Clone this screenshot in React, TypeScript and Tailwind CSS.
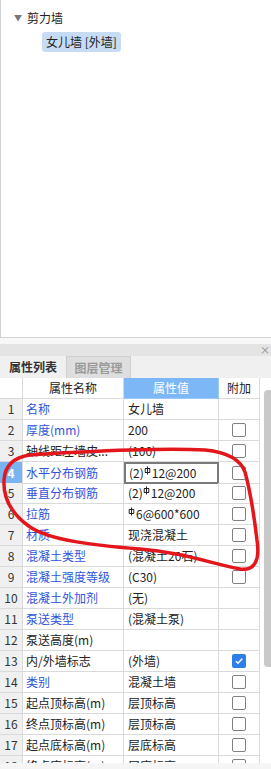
import React from 'react'

type Row = {
  no: number
  name: string
  blue: boolean
  value: React.ReactNode
  box: 'none' | 'empty' | 'checked'
}

function Hrb() {
  // 三级钢符号
  return (
    <svg width="7" height="9" viewBox="0 0 7 9" className="mb-[5px] mr-[1px]">
      <path d="M3.5 0.5v8M1 2.5h5M1 6.5h5M1.2 2.5v4M5.8 2.5v4" stroke="#222" strokeWidth="1" fill="none" />
    </svg>
  )
}

function Hpb() {
  return (
    <svg width="7" height="9" viewBox="0 0 7 9" className="mb-[5px] mr-[1px]">
      <path d="M3.5 0.5v8M1.2 2.5h4.6v4H1.2z" stroke="#222" strokeWidth="1" fill="none" />
    </svg>
  )
}

const rows: Row[] = [
  { no: 1, name: '名称', blue: true, value: '女儿墙', box: 'none' },
  { no: 2, name: '厚度(mm)', blue: true, value: '200', box: 'empty' },
  { no: 3, name: '轴线距左墙皮...', blue: false, value: '(100)', box: 'empty' },
  { no: 4, name: '水平分布钢筋', blue: true, value: <>(2)<Hrb />12@200</>, box: 'empty' },
  { no: 5, name: '垂直分布钢筋', blue: true, value: <>(2)<Hrb />12@200</>, box: 'empty' },
  { no: 6, name: '拉筋', blue: true, value: <><Hpb />6@600*600</>, box: 'empty' },
  { no: 7, name: '材质', blue: true, value: '现浇混凝土', box: 'empty' },
  { no: 8, name: '混凝土类型', blue: true, value: '(混凝土20石)', box: 'empty' },
  { no: 9, name: '混凝土强度等级', blue: true, value: '(C30)', box: 'empty' },
  { no: 10, name: '混凝土外加剂', blue: true, value: '(无)', box: 'none' },
  { no: 11, name: '泵送类型', blue: true, value: '(混凝土泵)', box: 'none' },
  { no: 12, name: '泵送高度(m)', blue: false, value: '', box: 'none' },
  { no: 13, name: '内/外墙标志', blue: false, value: '(外墙)', box: 'checked' },
  { no: 14, name: '类别', blue: true, value: '混凝土墙', box: 'empty' },
  { no: 15, name: '起点顶标高(m)', blue: false, value: '层顶标高', box: 'empty' },
  { no: 16, name: '终点顶标高(m)', blue: false, value: '层顶标高', box: 'empty' },
  { no: 17, name: '起点底标高(m)', blue: false, value: '层底标高', box: 'empty' },
  { no: 18, name: '终点底标高(m)', blue: false, value: '层底标高', box: 'empty' },
]

function Box({ kind }: { kind: Row['box'] }) {
  if (kind === 'none') return null
  if (kind === 'checked')
    return (
      <span className="w-[14px] h-[14px] rounded-[2px] bg-[#2f7fe8] flex items-center justify-center">
        <svg width="10" height="10" viewBox="0 0 10 10">
          <path d="M2 5.2l2 2L8.2 2.8" stroke="#fff" strokeWidth="1.6" fill="none" />
        </svg>
      </span>
    )
  return <span className="w-[14px] h-[14px] rounded-[2px] border border-[#808080] bg-white" />
}

export default function App() {
  return (
    <div className="relative w-[271px] h-[769px] overflow-hidden bg-[#f7f7f7] text-[12px] text-[#222] font-['Noto_Sans_CJK_SC','Microsoft_YaHei',sans-serif]">
      {/* 构件树 */}
      <div className="h-[338px] bg-white border-l border-b border-[#d2d2d2] pt-[9px]">
        <div className="flex items-center h-[18px] pl-[13px]">
          <span className="text-[8px] text-[#777] mr-[5px]">▼</span>
          <span>剪力墙</span>
        </div>
        <div className="flex mt-[5px] pl-[41px]">
          <span className="h-[20px] px-[4px] rounded-[3px] bg-[#c7dcf4] flex items-center">女儿墙 [外墙]</span>
        </div>
      </div>

      <div className="h-[6px]" />
      <div className="h-[12px] bg-[#e4e4e4] flex items-center justify-end pr-[1px] text-[10px] leading-none text-[#888]">×</div>

      {/* 标签 */}
      <div className="h-[22px] bg-[#f0f0f0] flex">
        <div className="w-[66px] flex items-center justify-center font-bold text-[#333]">属性列表</div>
        <div className="w-[65px] flex items-center justify-center font-bold text-[#9a9a9a] bg-[#dedede] border-x border-t border-[#cfcfcf]">图层管理</div>
      </div>

      <div className="flex bg-white">
        <div className="w-[260px]">
          <div className="grid grid-cols-[23px_101px_95px_41px] h-[21px]">
            <div className="border-r border-b border-[#dadada]" />
            <div className="border-r border-b border-[#dadada] flex items-center justify-center">属性名称</div>
            <div className="border-r border-b border-[#9cc8f5] bg-[#7db7f5] text-white flex items-center justify-center">属性值</div>
            <div className="border-r border-b border-[#dadada] flex items-center justify-center">附加</div>
          </div>
          {rows.map((r) => (
            <div key={r.no} className="grid grid-cols-[23px_101px_95px_41px] h-[21px]">
              <div
                className={
                  r.no === 4
                    ? 'border-r border-b border-[#dadada] bg-[#79b3f2] text-white font-bold flex items-center justify-center'
                    : 'border-r border-b border-[#dadada] bg-[#f0f0f0] text-[#333] flex items-center justify-center'
                }
              >
                {r.no}
              </div>
              <div className={'border-r border-b border-[#dadada] flex items-center pl-[3px] whitespace-nowrap ' + (r.blue ? 'text-[#2f55dc]' : 'text-[#222]')}>
                {r.name}
              </div>
              <div
                className={
                  r.no === 4
                    ? 'border-2 border-[#7a7a7a] flex items-center pl-[3px] whitespace-nowrap'
                    : 'border-r border-b border-[#dadada] flex items-center pl-[4px] whitespace-nowrap'
                }
              >
                {r.value}
              </div>
              <div className="border-r border-b border-[#dadada] flex items-center justify-center">
                <Box kind={r.box} />
              </div>
            </div>
          ))}
        </div>
        <div className="w-[11px] pt-[12px] pl-[4px]">
          <div className="h-[277px] bg-[#c9c9c9] rounded-l-[4px] rounded-r-[1px]" />
        </div>
      </div>

      <div className="absolute left-0 right-0 bottom-0 h-[6px] bg-[#f5f5f5]" />

      {/* 红色圈注 */}
      <svg className="absolute inset-0 pointer-events-none" width="271" height="769" viewBox="0 0 271 769">
        <path
          d="M30 455 C16 457 5 464 4 480 C3 497 10 513 30 527 C50 540 90 545 140 549 C180 552 210 563 240 569 C255 571 260 560 257 540 C254 515 250 490 245 472 C240 458 225 452 205 450 C170 448 120 450 80 452 C60 453 42 454 30 455"
          stroke="#e3161c"
          strokeWidth="3.5"
          fill="none"
          strokeLinecap="round"
        />
      </svg>
    </div>
  )
}
